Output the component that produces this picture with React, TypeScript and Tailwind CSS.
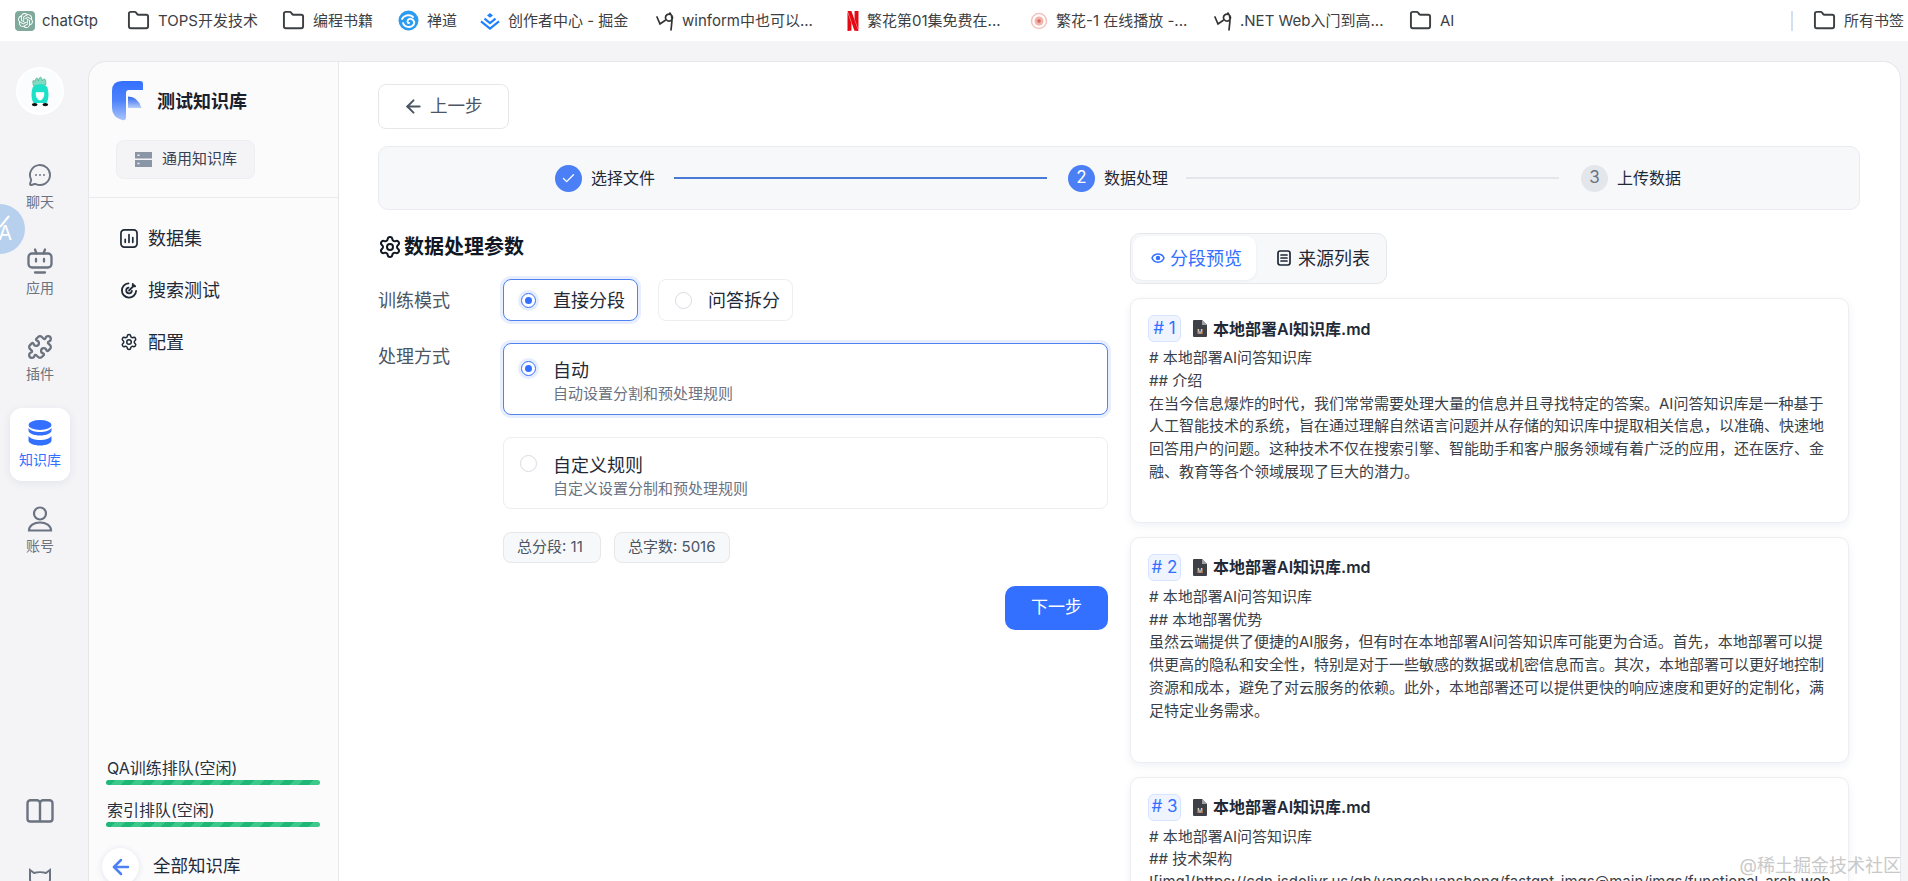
import React from "react";
import { ArrowLeft, Check, Folder, MessageCircleMore, Puzzle, Settings } from "lucide-react";
import { SiOpenai, SiNetflix } from "react-icons/si";

const FONT = "[font-family:'Inter','Noto_Sans_CJK_SC',sans-serif]";

function FolderIcon() {
  return <Folder size={23} strokeWidth={2} className="text-[#3c4043] shrink-0" />;
}

function ZentaoIcon() {
  return (
    <svg width="21" height="21" viewBox="0 0 21 21" className="shrink-0">
      <circle cx="10.5" cy="10.5" r="10" fill="#2c9cf0" />
      <path d="M4 9c2-4 8-5 11-2M5 13c1 4 8 6 11 1 1-3-2-6-5-5-2 1-2 4 0 4" fill="none" stroke="#fff" strokeWidth="1.8" strokeLinecap="round" />
    </svg>
  );
}

function JuejinIcon() {
  return (
    <svg width="20" height="18" viewBox="0 0 20 18" className="shrink-0">
      <path d="M10 1l3 2.4-3 2.4-3-2.4z" fill="#1e80ff" />
      <path d="M4.5 6.6L10 11l5.500-4.400M1 9.400L10 16.500l9-7.100" fill="none" stroke="#1e80ff" strokeWidth="2.200" />
    </svg>
  );
}

function CnIcon() {
  return (
    <svg width="18" height="22" viewBox="0 0 18 22" className="shrink-0">
      <path d="M1 7l3 7 5-3.500M14 3c3 3 2 8 1 17M9.500 8a3.500 3.500 0 1 0 5-3.500 3.500 3.500 0 0 0-5 3.500z" fill="none" stroke="#333" strokeWidth="1.700" strokeLinecap="round" />
    </svg>
  );
}

function BloomIcon() {
  return (
    <svg width="18" height="18" viewBox="0 0 18 18" className="shrink-0">
      <circle cx="9" cy="9" r="7.500" fill="none" stroke="#f3c4bd" strokeWidth="1.500" />
      <circle cx="9" cy="9" r="4.500" fill="#f0b4ab" />
      <circle cx="9" cy="9" r="1.800" fill="#d9685c" />
    </svg>
  );
}

function Mark({ w, icon, text }: { w: string; icon: React.ReactNode; text: string }) {
  return (
    <div className={`flex items-center shrink-0 ${w}`}>
      {icon}
      <span className="ml-[8px] text-[15px] leading-[20px] text-[#3c4043] whitespace-nowrap">{text}</span>
    </div>
  );
}

function Bookmarks() {
  return (
    <div className="h-[41px] shrink-0 bg-white flex items-center pl-[15px] overflow-hidden">
      <div className="flex items-center shrink-0 w-[112px]">
        <span className="w-[20px] h-[20px] rounded-[4px] bg-[#7fa99b] flex items-center justify-center shrink-0">
          <SiOpenai size={15} color="#fff" />
        </span>
        <span className="ml-[7px] text-[15px] leading-[20px] text-[#3c4043]">chatGtp</span>
      </div>
      <Mark w="w-[155px]" icon={<FolderIcon />} text="TOPS开发技术" />
      <Mark w="w-[116px]" icon={<FolderIcon />} text="编程书籍" />
      <Mark w="w-[82px]" icon={<ZentaoIcon />} text="禅道" />
      <Mark w="w-[176px]" icon={<JuejinIcon />} text="创作者中心 - 掘金" />
      <Mark w="w-[187px]" icon={<CnIcon />} text="winform中也可以..." />
      <div className="flex items-center shrink-0 w-[187px]">
        <SiNetflix size={20} color="#e50914" className="shrink-0" />
        <span className="ml-[4px] text-[15px] leading-[20px] text-[#3c4043] whitespace-nowrap">繁花第01集免费在...</span>
      </div>
      <Mark w="w-[184px]" icon={<BloomIcon />} text="繁花-1 在线播放 -..." />
      <Mark w="w-[195px]" icon={<CnIcon />} text=".NET Web入门到高..." />
      <Mark w="w-[382px]" icon={<FolderIcon />} text="AI" />
      <span className="w-[2px] h-[20px] bg-[#d3e0f3] shrink-0 mr-[20px]" />
      <Mark w="w-[94px]" icon={<FolderIcon />} text="所有书签" />
    </div>
  );
}

function Avatar() {
  return (
    <div className="w-[48px] h-[48px] rounded-full bg-[#fbfcfd] border-[2px] border-white flex items-center justify-center">
      <svg width="24" height="31" viewBox="0 0 24 38">
        <path d="M4 12C2 6 4 3 6 7 7 1 9 1 10 6c1-6 4-6 5 0 2-4 5-3 4 5z" fill="#7fdcc0" stroke="#3f9e86" strokeWidth="0.700" />
        <path d="M3 14c3-5 15-5 18 0 2 6 2 14-1 19H4C1 28 1 20 3 14z" fill="#1ce0c8" />
        <path d="M7 20h10c1 4-1 9-5 10-4-1-6-6-5-10z" fill="#fff" />
        <ellipse cx="5.500" cy="35" rx="3.500" ry="2" fill="#111" />
        <ellipse cx="18.500" cy="35" rx="3.500" ry="2" fill="#111" />
      </svg>
    </div>
  );
}

function RobotIcon() {
  return (
    <svg width="26" height="26" viewBox="0 0 26 26" fill="none" stroke="#6b7280" strokeWidth="2.300" strokeLinecap="round">
      <path d="M8 1.500l1.500 4M18 1.500l-1.500 4" />
      <rect x="1.500" y="5.500" width="23" height="14" rx="3.500" />
      <path d="M9 11v2.500M17 11v2.500M8 24.500h10" />
    </svg>
  );
}

function DbIcon() {
  return (
    <svg width="24" height="26" viewBox="0 0 24 26" fill="#3370ff">
      <ellipse cx="12" cy="5" rx="11.500" ry="5" />
      <path d="M.5 8v2.500c0 2.800 5.100 5 11.500 5s11.500-2.200 11.500-5V8c-2 2.800-6.500 4-11.500 4S2.500 10.800.5 8z" />
      <path d="M.5 16v4.500c0 2.800 5.100 5 11.500 5s11.500-2.200 11.500-5V16c-2 2.800-6.500 4-11.500 4S2.500 18.800.5 16z" />
    </svg>
  );
}

function PersonIcon() {
  return (
    <svg width="26" height="26" viewBox="0 0 26 26" fill="none" stroke="#6b7280" strokeWidth="2.200">
      <circle cx="13" cy="7.500" r="6" />
      <path d="M2 24.500c0-5 5-8 11-8s11 3 11 8z" />
    </svg>
  );
}

function BookIcon() {
  return (
    <svg width="28" height="24" viewBox="0 0 28 24" fill="none" stroke="#6b7280" strokeWidth="2.400" strokeLinejoin="round">
      <path d="M14 4c0-1.500-1.500-2.800-3-2.800H4.500a3 3 0 0 0-3 3v15.500a2.800 2.800 0 0 0 2.800 2.800H14zM14 4c0-1.500 1.500-2.800 3-2.800h6.500a3 3 0 0 1 3 3v15.500a2.800 2.800 0 0 1-2.800 2.800H14z" />
    </svg>
  );
}

function CatIcon() {
  return (
    <svg width="24" height="24" viewBox="0 0 24 24" fill="none" stroke="#6b7280" strokeWidth="2">
      <path d="M2 2l4 3c3-1 9-1 12 0l4-3v9c0 5-4 8-10 8S2 16 2 11z" />
    </svg>
  );
}

function RailItem({ icon, label, active }: { icon: React.ReactNode; label: string; active?: boolean }) {
  return (
    <div
      className={
        active
          ? "w-[60px] h-[73px] pt-[12px] rounded-[12px] bg-white shadow-[0_2px_8px_rgba(19,51,107,0.08)] flex flex-col items-center"
          : "w-[60px] h-[73px] pt-[12px] flex flex-col items-center"
      }
    >
      <div className="h-[26px] flex items-center justify-center">{icon}</div>
      <span className={active ? "mt-[4px] text-[14px] leading-[20px] text-[#3370ff]" : "mt-[4px] text-[14px] leading-[20px] text-[#6b7280]"}>
        {label}
      </span>
    </div>
  );
}

function Rail() {
  return (
    <aside className="w-[88px] shrink-0 pt-[26px] pr-[8px] flex flex-col items-center">
      <Avatar />
      <div className="mt-[35px] flex flex-col gap-[13px]">
        <RailItem icon={<MessageCircleMore size={24} strokeWidth={1.900} color="#6b7280" />} label="聊天" />
        <RailItem icon={<RobotIcon />} label="应用" />
        <RailItem icon={<Puzzle size={26} strokeWidth={2.100} color="#6b7280" />} label="插件" />
        <RailItem icon={<DbIcon />} label="知识库" active />
        <RailItem icon={<PersonIcon />} label="账号" />
      </div>
      <div className="mt-auto -mb-[11px] flex flex-col items-center gap-[45px]">
        <BookIcon />
        <CatIcon />
      </div>
    </aside>
  );
}

function ChartIcon() {
  return (
    <svg width="20" height="21" viewBox="0 0 19 20" fill="none" stroke="#1f2937" strokeWidth="1.800" strokeLinecap="round">
      <rect x="1" y="1" width="17" height="18" rx="3.500" />
      <path d="M5.500 14v-3M9.500 14V6M13.500 14V9" />
    </svg>
  );
}

function TargetIcon() {
  return (
    <svg width="21" height="21" viewBox="0 0 19 19" fill="none" stroke="#1f2937" strokeWidth="1.900" strokeLinecap="round">
      <path d="M9 2a7.500 7.500 0 1 0 8 8" />
      <path d="M9 6.500a3 3 0 1 0 3.500 3.500" />
      <path d="M9.500 9.500L15 4M13.500 2.500v2.500H16" />
    </svg>
  );
}

function FastLogo() {
  return (
    <svg width="31" height="40" viewBox="0 0 31 40" className="shrink-0">
      <defs>
        <linearGradient id="lgA" x1="0" y1="0" x2="0" y2="1">
          <stop offset="0" stopColor="#3370ff" />
          <stop offset="0.500" stopColor="#4d83fb" />
          <stop offset="1" stopColor="#a9c4fb" />
        </linearGradient>
        <linearGradient id="lgB" x1="0" y1="0" x2="0" y2="1">
          <stop offset="0" stopColor="#2f68ee" />
          <stop offset="1" stopColor="#b6cdfb" />
        </linearGradient>
      </defs>
      <path d="M10 0H28q3 0 3 3v6H17q-3 0-3 3v24q0 4-4 3Q0 36 0 27V10Q0 0 10 0z" fill="url(#lgA)" />
      <path d="M16 15.500q10 0 13.500 11.500H16z" fill="url(#lgB)" />
    </svg>
  );
}

function ServerIcon() {
  return (
    <svg width="17" height="15" viewBox="0 0 17 15" fill="#8a95a5">
      <path d="M0 0h17v6.500H0zM0 8h17v7H0z" />
      <path d="M2.500 2.500h2v1.500h-2zM2.500 10.800h2v1.500h-2z" fill="#f4f4f7" />
    </svg>
  );
}

function NavRow({ icon, label }: { icon: React.ReactNode; label: string }) {
  return (
    <div className="h-[40px] pl-[31px] flex items-center">
      <div className="w-[18px] flex items-center justify-center">{icon}</div>
      <span className="ml-[10px] text-[18px] text-[#1f2937]">{label}</span>
    </div>
  );
}

function QueueBar({ label }: { label: string }) {
  return (
    <div>
      <div className="pl-[1px] h-[22px] text-[16px] leading-[22px] text-[#27303d]">{label}</div>
      <div className="mt-[1px] w-[214px] h-[5px] rounded-full bg-[repeating-linear-gradient(135deg,#1fb777_0px,#1fb777_7px,#3cc98a_7px,#3cc98a_14px)]" />
    </div>
  );
}

function Panel() {
  return (
    <aside className="w-[251px] shrink-0 bg-[#fbfbfc] rounded-tl-[18px] border-t border-l border-r border-[#e5e7eb] flex flex-col">
      <div className="pt-[19px] pl-[23px] flex items-center">
        <FastLogo />
        <span className="ml-[14px] text-[18px] font-semibold text-[#1a202c]">测试知识库</span>
      </div>
      <div className="mt-[19px] ml-[27px] w-[139px] h-[39px] rounded-[8px] bg-[#f4f4f7] border border-[#eceef2] flex items-center pl-[18px]">
        <ServerIcon />
        <span className="ml-[10px] text-[15px] text-[#374151]">通用知识库</span>
      </div>
      <div className="mt-[18px] border-t border-[#e9ebef]" />
      <nav className="mt-[20px] flex flex-col gap-[12px]">
        <NavRow icon={<ChartIcon />} label="数据集" />
        <NavRow icon={<TargetIcon />} label="搜索测试" />
        <NavRow icon={<Settings size={20} strokeWidth={2} color="#1f2937" />} label="配置" />
      </nav>
      <div className="mt-auto -mb-[4px] pl-[17px] flex flex-col">
        <div className="flex flex-col gap-[14px]">
          <QueueBar label="QA训练排队(空闲)" />
          <QueueBar label="索引排队(空闲)" />
        </div>
        <div className="mt-[21px] -ml-[4px] flex items-center">
          <span className="w-[37px] h-[37px] rounded-full bg-white shadow-[0_1px_6px_rgba(19,51,107,0.12)] flex items-center justify-center">
            <ArrowLeft size={24} strokeWidth={2.500} color="#4d7ff5" />
          </span>
          <span className="ml-[14px] text-[17.500px] text-[#1f2937]">全部知识库</span>
        </div>
      </div>
    </aside>
  );
}

function StepCircle({ done, n, cur }: { done?: boolean; n: string; cur?: boolean }) {
  if (done) {
    return (
      <span className="w-[27px] h-[27px] rounded-full bg-[#4a7ff5] flex items-center justify-center shrink-0">
        <Check size={15} strokeWidth={2.200} color="#fff" />
      </span>
    );
  }
  return (
    <span
      className={
        cur
          ? "w-[27px] h-[27px] rounded-full bg-[#4a7ff5] text-white text-[17px] flex items-center justify-center shrink-0"
          : "w-[27px] h-[27px] rounded-full bg-[#e3e6eb] text-[#6b7280] text-[17px] flex items-center justify-center shrink-0"
      }
    >
      {n}
    </span>
  );
}

function Steps() {
  return (
    <div className="mt-[17px] mr-[40px] h-[64px] rounded-[10px] bg-[#f7f8fa] border border-[#e9ebef] flex items-center pl-[176px]">
      <StepCircle done n="1" />
      <span className="ml-[9px] w-[65px] text-[16px] text-[#1f2937] whitespace-nowrap">选择文件</span>
      <span className="ml-[18px] w-[373px] h-[2px] bg-[#4a7ad6]" />
      <span className="ml-[21px]"><StepCircle n="2" cur /></span>
      <span className="ml-[9px] w-[65px] text-[16px] text-[#1f2937] whitespace-nowrap">数据处理</span>
      <span className="ml-[17px] w-[373px] h-[2px] bg-[#e3e6eb]" />
      <span className="ml-[22px]"><StepCircle n="3" /></span>
      <span className="ml-[9px] w-[65px] text-[16px] text-[#1f2937] whitespace-nowrap">上传数据</span>
    </div>
  );
}

function Radio({ on }: { on?: boolean }) {
  if (on) {
    return (
      <span className="w-[15px] h-[15px] rounded-full bg-white border border-[#3370ff] ring-[3px] ring-[#e6edff] flex items-center justify-center shrink-0">
        <span className="w-[7px] h-[7px] rounded-full bg-[#3370ff]" />
      </span>
    );
  }
  return <span className="w-[17px] h-[17px] -mx-[1px] rounded-full bg-white border border-[#d7dbe1] shrink-0" />;
}

function Form() {
  return (
    <div className="w-[730px] shrink-0">
      <div className="h-[28px] flex items-center">
        <Settings size={24} strokeWidth={2} color="#111824" />
        <span className="ml-[2px] text-[20px] font-semibold text-[#111824]">数据处理参数</span>
      </div>
      <div className="mt-[18px] flex items-center">
        <span className="w-[125px] shrink-0 text-[18px] text-[#4b5563]">训练模式</span>
        <div className="w-[135px] h-[42px] rounded-[8px] bg-white border border-[#4f84ee] ring-[3px] ring-[#e8eeff] flex items-center pl-[17px]">
          <Radio on />
          <span className="ml-[17px] text-[18px] text-[#1f2937] whitespace-nowrap">直接分段</span>
        </div>
        <div className="ml-[20px] w-[135px] h-[42px] rounded-[8px] bg-white border border-[#eceef2] flex items-center pl-[17px]">
          <Radio />
          <span className="ml-[17px] text-[18px] text-[#1f2937] whitespace-nowrap">问答拆分</span>
        </div>
      </div>
      <div className="mt-[22px] flex items-start">
        <span className="w-[125px] shrink-0 leading-[28px] text-[18px] text-[#4b5563]">处理方式</span>
        <div className="flex-1">
          <div className="h-[72px] rounded-[8px] bg-white border border-[#4f84ee] ring-[3px] ring-[#e8eeff] flex items-start pl-[17px] pt-[17px]">
            <Radio on />
            <div className="ml-[17px] -mt-[3px]">
              <div className="text-[18px] leading-[26px] text-[#1f2937]">自动</div>
              <div className="text-[15px] leading-[20px] text-[#6b7280]">自动设置分割和预处理规则</div>
            </div>
          </div>
          <div className="mt-[22px] h-[72px] rounded-[8px] bg-white border border-[#eceef2] flex items-start pl-[17px] pt-[17px]">
            <Radio />
            <div className="ml-[17px] -mt-[2px]">
              <div className="text-[18px] leading-[26px] text-[#1f2937]">自定义规则</div>
              <div className="text-[15px] leading-[20px] text-[#6b7280]">自定义设置分制和预处理规则</div>
            </div>
          </div>
          <div className="mt-[23px] flex gap-[13px]">
            <span className="w-[98px] h-[31px] pl-[13px] rounded-[8px] bg-[#f7f8fa] border border-[#e5e7eb] flex items-center text-[15px] text-[#4b5563] whitespace-nowrap">总分段: 11</span>
            <span className="w-[116px] h-[31px] pl-[13px] rounded-[8px] bg-[#f7f8fa] border border-[#e5e7eb] flex items-center text-[15px] text-[#4b5563] whitespace-nowrap">总字数: 5016</span>
          </div>
        </div>
      </div>
      <div className="mt-[23px] flex justify-end">
        <button className="w-[103px] h-[44px] rounded-[10px] bg-[#3370ff] text-white text-[17px]">下一步</button>
      </div>
    </div>
  );
}

function EyeIcon() {
  return (
    <svg width="14" height="12" viewBox="0 0 14 12" fill="none" stroke="#3370ff" strokeWidth="1.500">
      <path d="M1 6c2-5.500 10-5.500 12 0-2 5.500-10 5.500-12 0z" />
      <circle cx="7" cy="6" r="1.500" fill="#3370ff" />
    </svg>
  );
}

function ListIcon() {
  return (
    <svg width="14" height="16" viewBox="0 0 14 16" fill="none" stroke="#1f2937" strokeWidth="1.700" strokeLinecap="round">
      <rect x="1" y="1" width="12" height="14" rx="2.200" />
      <path d="M4 5h6M4 8h6M4 11h6" />
    </svg>
  );
}

function MdIcon() {
  return (
    <svg width="14" height="17" viewBox="0 0 14 17" className="shrink-0">
      <path d="M0 1q0-1 1-1h8l5 5v11q0 1-1 1H1q-1 0-1-1z" fill="#3f3f46" />
      <path d="M9 0v5h5z" fill="#a1a1aa" />
      <text x="7" y="14" fontSize="6" textAnchor="middle" fill="#fff">M</text>
    </svg>
  );
}

function Chunk({ n, lines, body, pad, url }: { n: number; lines: string[]; body: string; pad: string; url?: boolean }) {
  return (
    <div className={`w-[719px] rounded-[10px] bg-white border border-[#eceef2] shadow-[0_3px_8px_rgba(19,51,107,0.07)] pt-[16px] px-[17px] ${pad}`}>
      <div className="flex items-center h-[27px]">
        <span className="w-[33px] h-[27px] rounded-[6px] bg-[#f0f4ff] border border-[#d6e4ff] text-[#3370ff] text-[17px] flex items-center justify-center whitespace-nowrap"># {n}</span>
        <span className="ml-[12px]"><MdIcon /></span>
        <span className="ml-[6px] text-[16px] font-semibold text-[#1f2937] whitespace-nowrap">本地部署AI知识库.md</span>
      </div>
      <div className={url ? "mt-[5px] pl-[1px] text-[15px] leading-[22.800px] text-[#3a4048] break-all" : "mt-[5px] pl-[1px] text-[15px] leading-[22.800px] text-[#3a4048]"}>
        {lines.map((l) => (
          <div key={l}>{l}</div>
        ))}
        <div>{body}</div>
      </div>
    </div>
  );
}

function Preview() {
  return (
    <div className="ml-[22px] shrink-0">
      <div className="w-[257px] h-[51px] rounded-[10px] bg-[#f7f8fa] border border-[#e5e7eb] pt-[2px] pl-[2px] flex items-start">
        <div className="w-[123px] h-[44px] rounded-[10px] bg-white shadow-[0_1px_3px_rgba(19,51,107,0.06)] flex items-center pl-[18px]">
          <EyeIcon />
          <span className="ml-[5px] text-[18px] text-[#3370ff] whitespace-nowrap">分段预览</span>
        </div>
        <div className="h-[44px] flex items-center pl-[21px]">
          <ListIcon />
          <span className="ml-[7px] text-[18px] text-[#1f2937] whitespace-nowrap">来源列表</span>
        </div>
      </div>
      <div className="mt-[14px] flex flex-col gap-[14px]">
        <Chunk
          n={1}
          pad="pb-[38px]"
          lines={["# 本地部署AI问答知识库", "## 介绍"]}
          body="在当今信息爆炸的时代，我们常常需要处理大量的信息并且寻找特定的答案。AI问答知识库是一种基于人工智能技术的系统，旨在通过理解自然语言问题并从存储的知识库中提取相关信息，以准确、快速地回答用户的问题。这种技术不仅在搜索引擎、智能助手和客户服务领域有着广泛的应用，还在医疗、金融、教育等各个领域展现了巨大的潜力。"
        />
        <Chunk
          n={2}
          pad="pb-[39px]"
          lines={["# 本地部署AI问答知识库", "## 本地部署优势"]}
          body="虽然云端提供了便捷的AI服务，但有时在本地部署AI问答知识库可能更为合适。首先，本地部署可以提供更高的隐私和安全性，特别是对于一些敏感的数据或机密信息而言。其次，本地部署可以更好地控制资源和成本，避免了对云服务的依赖。此外，本地部署还可以提供更快的响应速度和更好的定制化，满足特定业务需求。"
        />
        <Chunk
          n={3}
          url
          pad="pb-[20px]"
          lines={["# 本地部署AI问答知识库", "## 技术架构"]}
          body="![img](https://cdn.jsdelivr.us/gh/yangchuansheng/fastgpt-imgs@main/imgs/functional-arch.webp)"
        />
      </div>
    </div>
  );
}

export default function App() {
  return (
    <div className={`${FONT} relative w-[1908px] h-[881px] overflow-hidden bg-[#f4f4f7] flex flex-col`}>
      <Bookmarks />
      <div className="flex-1 min-h-0 flex">
        <Rail />
        <div className="flex-1 min-w-0 mt-[20px] flex overflow-hidden">
          <Panel />
          <main className="flex-1 min-w-0 mr-[7px] bg-white rounded-tr-[18px] border-t border-r border-[#e5e7eb] pt-[22px] pl-[39px] overflow-hidden">
            <button className="w-[131px] h-[45px] rounded-[8px] bg-white border border-[#e5e7eb] flex items-center pl-[24px] text-[17.500px] text-[#4b5563]">
              <ArrowLeft size={21} strokeWidth={2.300} color="#4b5563" />
              <span className="ml-[6px]">上一步</span>
            </button>
            <Steps />
            <div className="mt-[23px] flex items-start">
              <Form />
              <Preview />
            </div>
          </main>
        </div>
      </div>
      <div className="absolute left-[-25px] top-[204px] w-[50px] h-[50px] rounded-full bg-[#b6d0ee] flex items-center justify-end pr-[13px] pt-[8px] text-[20px] text-white">
        A
        <svg width="14" height="14" viewBox="0 0 14 14" className="absolute left-[22px] top-[10px]">
          <path d="M3 13L12 2" stroke="#fff" strokeWidth="2" />
        </svg>
      </div>
      <div className="absolute right-[7px] top-[855px] text-[18px] leading-[22px] text-[#c9c9c9]">@稀土掘金技术社区</div>
    </div>
  );
}
